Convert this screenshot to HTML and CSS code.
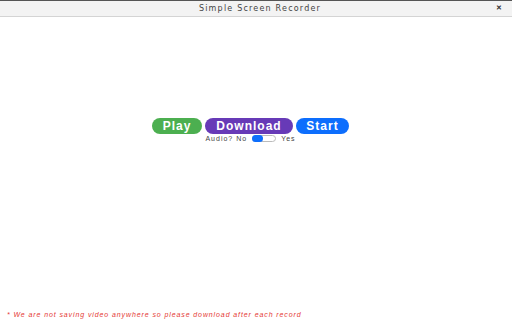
FILE: index.html
```html
<!DOCTYPE html>
<html>
<head>
<meta charset="utf-8">
<link rel="stylesheet" href="styles.css">
</head>
<body>
<div class="window">
  <header class="titlebar">
    <span class="title">Simple Screen Recorder</span>
    <span class="close">✕</span>
  </header>
  <main class="content">
    <div class="controls">
      <div class="buttons">
        <button class="btn play">Play</button>
        <button class="btn download">Download</button>
        <button class="btn start">Start</button>
      </div>
      <div class="audio">
        <span>Audio? No</span>
        <span class="toggle"><span class="knob"></span></span>
        <span>Yes</span>
      </div>
    </div>
  </main>
  <footer class="note">* We are not saving video anywhere so please download after each record</footer>
</div>
</body>
</html>
```
FILE: styles.css
```css
html, body { margin: 0; padding: 0; }
body { width: 512px; height: 320px; overflow: hidden; background: #fff; font-family: "Liberation Sans", Arial, sans-serif; }
.window { display: flex; flex-direction: column; height: 320px; border-top: 1px solid #555; box-sizing: border-box; }
.titlebar { height: 15px; background: #f3f3f3; border-bottom: 1px solid #d4d4d4; display: flex; align-items: center; justify-content: center; position: relative; }
.title { font-family: "DejaVu Sans", sans-serif; font-size: 8px; color: #444; letter-spacing: 1.2px; margin-left: 8px; }
.close { position: absolute; right: 10px; top: 3px; font-size: 7px; color: #333; font-weight: bold; }
.content { flex: 1; display: flex; justify-content: center; padding: 101px 11px 0 0; }
.controls { display: flex; flex-direction: column; align-items: center; }
.buttons { display: flex; gap: 3px; }
.btn { border: none; color: #fff; font-family: "Liberation Sans", Arial, sans-serif; font-weight: bold; font-size: 12px; letter-spacing: 1px; height: 16px; padding: 0; border-radius: 8px; line-height: 16px; }
.play { background: #4caf50; width: 50px; }
.download { background: #673ab7; width: 88px; }
.start { background: #0d6efd; width: 53px; }
.audio { display: flex; align-items: center; gap: 4px; font-size: 7px; letter-spacing: 1px; color: #444; margin-top: 1px; margin-left: 0; }
.toggle { width: 22px; height: 5px; border: 1px solid #bbb; border-radius: 4px; position: relative; background: #fff; margin: 0 1px; }
.knob { position: absolute; left: -1px; top: -1px; width: 11px; height: 7px; border-radius: 4px; background: #0d6efd; }
.note { font-size: 7px; font-style: italic; letter-spacing: 0.9px; color: #e53935; padding: 0 0 1px 7px; line-height: 8px; }
```
